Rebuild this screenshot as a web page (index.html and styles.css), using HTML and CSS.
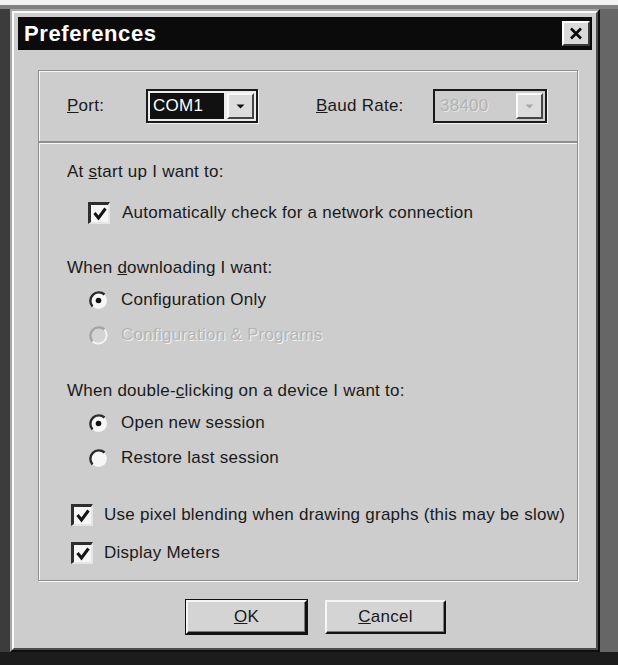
FILE: index.html
```html
<!DOCTYPE html>
<html lang="en">
<head>
<meta charset="utf-8">
<title>Preferences</title>
<link rel="stylesheet" href="styles.css">
</head>
<body>
<div class="screen">
  <div class="dialog">
    <div class="dialog-frame">
      <div class="titlebar">
        <span class="title">Preferences</span>
        <span class="close">
          <svg width="14" height="13" viewBox="0 0 14 13"><path d="M2 1.5 L12 11.5 M12 1.5 L2 11.5" stroke="#0a0a0a" stroke-width="2.6" fill="none"/></svg>
        </span>
      </div>
      <div class="client">
        <div class="panel port-panel">
          <span class="lbl lbl-port"><u>P</u>ort:</span>
          <span class="combo combo-port">
            <span class="combo-text">COM1</span>
            <span class="drop"><svg width="9" height="5" viewBox="0 0 9 5"><path d="M0.5 0.5 H8.5 L4.5 4.5 Z" fill="#111"/></svg></span>
          </span>
          <span class="lbl lbl-baud"><u>B</u>aud Rate:</span>
          <span class="combo combo-baud">
            <span class="combo-text">38400</span>
            <span class="drop"><svg width="9" height="5" viewBox="0 0 9 5"><path d="M0.5 0.5 H8.5 L4.5 4.5 Z" fill="#a8a8a8"/></svg></span>
          </span>
        </div>
        <div class="panel options-panel">
          <div class="row"><span>At <u>s</u>tart up I want to:</span></div>
          <div class="row indent gap-check1">
            <span class="cb"><svg width="16" height="16" viewBox="0 0 16 16"><path d="M2.5 7 L6.5 12 L13.5 2.5" stroke="#151515" stroke-width="3" fill="none"/></svg></span>
            <span class="txt">Automatically check for a network connection</span>
          </div>
          <div class="row gap-section"><span>When <u>d</u>ownloading I want:</span></div>
          <div class="row indent">
            <svg class="rb" width="21" height="21" viewBox="0 0 21 21"><circle cx="10.5" cy="10.5" r="8.5" fill="#f6f6f6"/><path d="M16.5 4.5 A8.5 8.5 0 0 0 4.5 16.5" stroke="#2a2a2a" stroke-width="2.4" fill="none"/><circle cx="10.5" cy="10.5" r="2.8" fill="#111"/></svg>
            <span class="txt">Configuration Only</span>
          </div>
          <div class="row indent gap-radio">
            <svg class="rb" width="21" height="21" viewBox="0 0 21 21"><circle cx="10.5" cy="10.5" r="8.5" fill="#d4d4d4"/><path d="M16.5 4.5 A8.5 8.5 0 0 0 4.5 16.5" stroke="#a4a4a4" stroke-width="2.4" fill="none"/><path d="M4.5 16.5 A8.5 8.5 0 0 0 16.5 4.5" stroke="#f4f4f4" stroke-width="1.8" fill="none"/></svg>
            <span class="txt disabled">Configuration &amp; Programs</span>
          </div>
          <div class="row gap-section2"><span>When double-<u>c</u>licking on a device I want to:</span></div>
          <div class="row indent">
            <svg class="rb" width="21" height="21" viewBox="0 0 21 21"><circle cx="10.5" cy="10.5" r="8.5" fill="#f6f6f6"/><path d="M16.5 4.5 A8.5 8.5 0 0 0 4.5 16.5" stroke="#2a2a2a" stroke-width="2.4" fill="none"/><circle cx="10.5" cy="10.5" r="2.8" fill="#111"/></svg>
            <span class="txt">Open new session</span>
          </div>
          <div class="row indent gap-radio">
            <svg class="rb" width="21" height="21" viewBox="0 0 21 21"><circle cx="10.5" cy="10.5" r="8.5" fill="#f6f6f6"/><path d="M16.5 4.5 A8.5 8.5 0 0 0 4.5 16.5" stroke="#2a2a2a" stroke-width="2.4" fill="none"/></svg>
            <span class="txt">Restore last session</span>
          </div>
          <div class="row indent-small gap-section3">
            <span class="cb"><svg width="16" height="16" viewBox="0 0 16 16"><path d="M2.5 7 L6.5 12 L13.5 2.5" stroke="#151515" stroke-width="3" fill="none"/></svg></span>
            <span class="txt-small">Use pixel blending when drawing graphs (this may be slow)</span>
          </div>
          <div class="row indent-small gap-check3">
            <span class="cb"><svg width="16" height="16" viewBox="0 0 16 16"><path d="M2.5 7 L6.5 12 L13.5 2.5" stroke="#151515" stroke-width="3" fill="none"/></svg></span>
            <span class="txt-small">Display Meters</span>
          </div>
        </div>
        <div class="buttons">
          <button class="btn btn-default"><u>O</u>K</button>
          <button class="btn"><u>C</u>ancel</button>
        </div>
      </div>
    </div>
  </div>
</div>
</body>
</html>
```
FILE: styles.css
```css
* { box-sizing: border-box; }

body { margin: 0; }

.screen {
  width: 618px;
  height: 665px;
  display: flex;
  padding: 9px 18px 13px 10px;
  background:
    linear-gradient(#f3f3f3, #f3f3f3) 0 0 / 100% 5px no-repeat,
    linear-gradient(#808080, #808080) 0 5px / 100% 4px no-repeat,
    linear-gradient(#666666, #666666) 600px 9px / 18px 643px no-repeat,
    linear-gradient(#3c3c3c, #3c3c3c) 0 9px / 10px 643px no-repeat,
    #1c1c1c;
}

.dialog {
  flex: 1;
  display: flex;
  border: 2px solid;
  border-color: #a8a8a8 #0e0e0e #0e0e0e #a8a8a8;
}

.dialog-frame {
  flex: 1;
  display: flex;
  flex-direction: column;
  padding: 4px;
  background: #cdcdcd;
  border: 2px solid;
  border-color: #fafafa #4c4c4c #4c4c4c #fafafa;
}

.titlebar {
  height: 33px;
  flex: none;
  display: flex;
  align-items: center;
  justify-content: space-between;
  padding: 0 2px 0 6px;
  background: #0b0b0b;
}

.title {
  color: #ffffff;
  font: bold 22px "Liberation Sans", Arial, sans-serif;
  letter-spacing: 0.6px;
}

.close {
  width: 28px;
  height: 25px;
  display: flex;
  align-items: center;
  justify-content: center;
  background: #d9d9d9;
  border: 2px solid;
  border-color: #fdfdfd #3a3a3a #3a3a3a #fdfdfd;
}

.client {
  display: flex;
  flex-direction: column;
  padding: 20px 14px 0 20px;
  font: 17px "Liberation Sans", Arial, sans-serif;
  letter-spacing: 0.25px;
  color: #1a1a1a;
}

.panel {
  border: 1px solid #8e8e8e;
  box-shadow: inset 1px 1px 0 #f8f8f8, 1px 1px 0 #f8f8f8;
}

.port-panel {
  height: 72px;
  flex: none;
  display: flex;
  align-items: center;
  padding-left: 28px;
}

.lbl-port { width: 79px; }
.lbl-baud { width: 117px; }

.combo {
  height: 34px;
  display: flex;
  padding: 2px;
  border: 2px solid #1a1a1a;
  box-shadow: 1px 1px 0 #f2f2f2;
  background: #ececec;
}

.combo-port { width: 112px; margin-right: 58px; }
.combo-baud { width: 114px; background: #cdcdcd; }

.combo-text {
  flex: 1;
  display: flex;
  align-items: center;
  padding-left: 3px;
}

.combo-port .combo-text {
  background: #111111;
  color: #ffffff;
  margin-right: 3px;
}

.combo-baud .combo-text {
  color: #b2b2b2;
  text-shadow: 1px 1px 0 #e6e6e6;
}

.drop {
  width: 27px;
  display: flex;
  align-items: center;
  justify-content: center;
  background: #dcdcdc;
  border: 2px solid;
  border-color: #fafafa #444444 #444444 #fafafa;
}

.options-panel {
  height: 439px;
  flex: none;
  display: flex;
  flex-direction: column;
  padding: 13px 0 0 28px;
}

.row {
  height: 32px;
  display: flex;
  align-items: center;
}

.indent { padding-left: 21px; }
.indent-small { padding-left: 4px; }

.gap-check1 { margin-top: 9px; }
.gap-section { margin-top: 23px; }
.gap-radio { margin-top: 3px; }
.gap-section2 { margin-top: 24px; }
.gap-section3 { margin-top: 25px; }
.gap-check3 { margin-top: 6px; }

.cb {
  width: 22px;
  height: 22px;
  flex: none;
  display: flex;
  align-items: center;
  justify-content: center;
  background: #f6f6f6;
  border-style: solid;
  border-width: 3px 2px 2px 3px;
  border-color: #2e2e2e #e6e6e6 #e6e6e6 #2e2e2e;
}

.rb { flex: none; }

.txt { margin-left: 12px; }
.txt-small { margin-left: 11px; }

.disabled {
  color: #b4b4b4;
  text-shadow: 1px 1px 0 #f2f2f2;
}

.buttons {
  display: flex;
  gap: 18px;
  margin-top: 19px;
  padding-left: 148px;
}

.btn {
  width: 121px;
  height: 34px;
  padding: 0;
  font: 17px "Liberation Sans", Arial, sans-serif;
  letter-spacing: 0.25px;
  color: #1a1a1a;
  background: #d4d4d4;
  border: 2px solid;
  border-color: #f6f6f6 #111111 #111111 #f6f6f6;
  box-shadow: inset -1px -1px 0 #7a7a7a;
}

.btn-default {
  outline: 1px solid #111111;
}
```
